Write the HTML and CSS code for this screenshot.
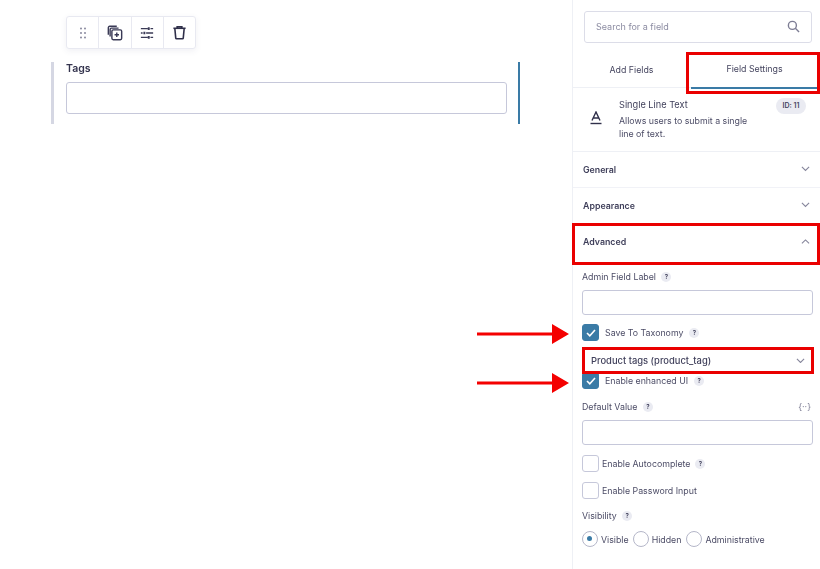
FILE: index.html
```html
<!DOCTYPE html>
<html lang="en">
<head>
<meta charset="utf-8">
<title>Field Settings</title>
<link rel="stylesheet" href="styles.css">
</head>
<body>
<div class="page">
  <main class="canvas">
    <div class="toolbar">
      <div class="tool"><svg width="16" height="16" viewBox="0 0 16 16" fill="#7c7c94"><circle cx="6" cy="3.500" r=".9"/><circle cx="10" cy="3.500" r=".9"/><circle cx="6" cy="8" r=".9"/><circle cx="10" cy="8" r=".9"/><circle cx="6" cy="12.500" r=".9"/><circle cx="10" cy="12.500" r=".9"/></svg></div>
      <div class="tool"><svg width="16" height="16" viewBox="0 0 18 18" fill="none" stroke="#3a3a56" stroke-width="1.600"><path d="M1.500 11V3a1.500 1.500 0 0 1 1.500-1.500h8"/><path d="M3.500 13V5A1.500 1.500 0 0 1 5 3.500h8"/><rect x="5.500" y="5.500" width="11" height="11" rx="1.500"/><path d="M11 8.500v5M8.500 11h5"/></svg></div>
      <div class="tool"><svg width="14" height="14" viewBox="0 0 16 16" fill="none" stroke="#3a3a56" stroke-width="1.500"><path d="M1 3h8M12 3h3M1 8h2M7 8h8M1 13h8M12 13h3"/><path d="M10 1.500v3M5 6.500v3M10 11.500v3" stroke-width="2.200"/></svg></div>
      <div class="tool"><svg width="15" height="15" viewBox="0 0 16 16" fill="none" stroke="#2f2f4a" stroke-width="1.700"><path d="M1.500 3.500h13"/><path d="M5.500 3.500V2h5v1.500"/><path d="M3 3.500l1 10.500a.8.8 0 0 0 .8.700h6.400a.8.8 0 0 0 .8-.700l1-10.500"/></svg></div>
    </div>
    <section class="field">
      <label class="field-label">Tags</label>
      <div class="text-input tags-input"></div>
    </section>
  </main>

  <aside class="sidebar">
    <div class="search">
      <span>Search for a field</span>
      <svg width="13" height="13" viewBox="0 0 14 14" fill="none" stroke="#7d7d94" stroke-width="1.500"><circle cx="5.800" cy="5.800" r="4.300"/><path d="M9 9l4 4"/></svg>
    </div>
    <div class="tabs">
      <div class="tab">Add Fields</div>
      <div class="tab tab-active">Field Settings</div>
    </div>
    <div class="info">
      <svg class="info-icon" width="14" height="14" viewBox="0 0 14 14" fill="none" stroke="#2f2f4a" stroke-width="1.400"><path d="M3 9.500L7 1l4 8.500M4.500 7h5"/><path d="M1.500 12.500h11"/></svg>
      <div class="info-text">
        <div class="info-title">Single Line Text</div>
        <div class="info-desc">Allows users to submit a single line of text.</div>
      </div>
      <div class="badge">ID: 11</div>
    </div>
    <div class="section-row"><span>General</span><svg class="chev" viewBox="0 0 10 6"><path d="M1 1l4 4 4-4"/></svg></div>
    <div class="section-row"><span>Appearance</span><svg class="chev" viewBox="0 0 10 6"><path d="M1 1l4 4 4-4"/></svg></div>
    <div class="section-row section-open"><span>Advanced</span><svg class="chev" viewBox="0 0 10 6"><path d="M1 5l4-4 4 4"/></svg></div>

    <div class="settings">
      <div class="label label-admin">Admin Field Label <i class="help">?</i></div>
      <div class="text-input side-input"></div>

      <div class="check check-taxonomy">
        <span class="box box-on"><svg width="10" height="8" viewBox="0 0 10 8" fill="none" stroke="#fff" stroke-width="1.600"><path d="M1 4l2.800 2.800L9 1"/></svg></span>
        <span>Save To Taxonomy</span> <i class="help">?</i>
      </div>
      <div class="select">
        <span>Product tags (product_tag)</span>
        <svg class="chev" viewBox="0 0 10 6"><path d="M1 1l4 4 4-4"/></svg>
      </div>
      <div class="check">
        <span class="box box-on"><svg width="10" height="8" viewBox="0 0 10 8" fill="none" stroke="#fff" stroke-width="1.600"><path d="M1 4l2.800 2.800L9 1"/></svg></span>
        <span>Enable enhanced UI</span> <i class="help">?</i>
      </div>

      <div class="label label-default"><span>Default Value <i class="help">?</i></span><span class="merge">{··}</span></div>
      <div class="text-input side-input"></div>

      <div class="check check-plain check-auto">
        <span class="box"></span><span>Enable Autocomplete</span> <i class="help">?</i>
      </div>
      <div class="check check-plain check-pass">
        <span class="box"></span><span>Enable Password Input</span>
      </div>

      <div class="label label-vis">Visibility <i class="help">?</i></div>
      <div class="radios">
        <span class="radio radio-on"></span><span class="radio-text">Visible</span>
        <span class="radio"></span><span class="radio-text">Hidden</span>
        <span class="radio"></span><span class="radio-text">Administrative</span>
      </div>
    </div>
  </aside>

  <div class="mark mark-tab"></div>
  <div class="mark mark-adv"></div>
  <div class="mark mark-select"></div>
  <svg class="arrow arrow-1" width="92" height="20" viewBox="0 0 92 20"><path d="M0 8.500h75V0l17 10-17 10v-8.500H0z" fill="#f40000"/></svg>
  <svg class="arrow arrow-2" width="92" height="20" viewBox="0 0 92 20"><path d="M0 8.500h75V0l17 10-17 10v-8.500H0z" fill="#f40000"/></svg>
</div>
</body>
</html>
```
FILE: styles.css
```css
* { box-sizing: border-box; }
html, body { margin: 0; padding: 0; background: #fff; }
body { font-family: Inter, "Liberation Sans", sans-serif; color: #3f3f5a; overflow: hidden; }

.page { position: relative; width: 820px; height: 569px; display: flex; filter: blur(0.5px); }

.canvas { width: 572px; flex: none; padding: 16px 0 0 51px; }
.toolbar { display: flex; width: 130px; height: 33px; margin-left: 15px; background: #fff; border: 1px solid #e8e9f1; border-radius: 3px; box-shadow: 0 2px 6px rgba(60, 60, 110, .08); }
.tool { flex: 1; display: flex; align-items: center; justify-content: center; border-right: 1px solid #e8e9f1; }
.tool:last-child { border-right: 0; }

.field { width: 469px; height: 62px; margin-top: 13px; padding: 0 11px 0 12px; border-left: 3px solid #d5d7e3; border-right: 2px solid #3a7ba6; }
.field-label { display: block; font-size: 10.500px; font-weight: 600; line-height: 13px; color: #34344e; }
.text-input { background: #fff; border: 1.500px solid #c6c8da; border-radius: 3px; }
.tags-input { height: 32px; margin-top: 7px; }

.sidebar { width: 248px; flex: none; border-left: 1px solid #eef0f5; }
.search { display: flex; align-items: center; justify-content: space-between; width: 228px; height: 32px; margin: 11px 0 0 11px; padding: 0 11px 2px; border: 1.500px solid #dcdde8; border-radius: 3px; font-size: 9px; line-height: 1; color: #8c8ca2; }

.tabs { display: flex; height: 36px; margin-top: 9px; border-bottom: 1px solid #eef0f5; font-size: 8.800px; color: #45455f; }
.tab { display: flex; align-items: center; justify-content: center; height: 37px; padding-bottom: 3px; }
.tab:first-child { width: 117px; }
.tab-active { width: 127px; margin-left: 1px; border-bottom: 2px solid #3a7ba6; }

.info { position: relative; display: flex; height: 64px; padding: 10px 0 0 46px; border-bottom: 1px solid #eef0f5; }
.info-icon { position: absolute; left: 16px; top: 23px; }
.info-text { width: 136px; }
.info-title { font-size: 9.200px; line-height: 13px; color: #3f3f5a; }
.info-desc { margin-top: 3px; font-size: 8.800px; line-height: 13px; color: #4c4c66; }
.badge { position: absolute; right: 14px; top: 10px; width: 30px; height: 16px; border-radius: 8px; background: #eaebf2; font-size: 7px; font-weight: 600; line-height: 16px; text-align: center; color: #45455f; }

.section-row { display: flex; align-items: center; justify-content: space-between; height: 36px; padding: 0 10px 1px; border-bottom: 1px solid #f1f2f7; font-size: 8.800px; font-weight: 600; color: #3f3f5a; }
.section-open { border-bottom: 0; }
.chev { width: 9px; height: 5.400px; fill: none; stroke: #85859b; stroke-width: 1.200; }

.settings { padding: 0 7px 0 9px; font-size: 8.800px; color: #4c4c66; }
.label { font-size: 8.800px; line-height: 12px; }
.label-admin { margin-top: 11px; }
.side-input { height: 25px; margin-top: 7px; }
.help { display: inline-block; width: 10px; height: 10px; margin-left: 3px; border-radius: 50%; background: #eaebf2; font-style: normal; font-size: 6px; font-weight: 700; line-height: 10px; text-align: center; vertical-align: 1px; color: #45455f; }

.check { display: flex; align-items: center; gap: 5px; height: 17px; }
.check .help { margin-left: 1px; }
.check-taxonomy { margin-top: 9px; }
.box { display: flex; align-items: center; justify-content: center; width: 17px; height: 17px; margin-right: 1px; border: 1.500px solid #c6c8da; border-radius: 3px; background: #fff; }
.box-on { background: #3a7ba6; border-color: #3a7ba6; }
.select { display: flex; align-items: center; justify-content: space-between; height: 23px; margin: 8px 0 0; padding: 0 8px 0 9px; font-size: 9.400px; font-weight: 500; color: #3f3f5a; }

.label-default { display: flex; justify-content: space-between; margin-top: 12px; padding-right: 2px; }
.merge { color: #7d7d94; font-size: 9px; }

.check-plain { gap: 2px; }
.check-plain .help { margin-left: 3px; }
.check-auto { margin-top: 10px; }
.check-pass { margin-top: 10px; }
.label-vis { margin-top: 11px; }

.radios { display: flex; align-items: center; margin-top: 9px; }
.radio { position: relative; width: 16px; height: 16px; border: 1.500px solid #b4b6c8; border-radius: 50%; background: #fff; }
.radio-on::after { content: ""; position: absolute; left: 4px; top: 4px; width: 5px; height: 5px; border-radius: 50%; background: #3a7ba6; }
.radio-text { margin: 0 4px 0 3px; font-size: 8.800px; }
.radio-text:nth-child(4) { margin-right: 5px; }

.mark { position: absolute; border: 3px solid #ea0000; }
.mark-tab { left: 686px; top: 52px; width: 134px; height: 42px; }
.mark-adv { left: 572px; top: 223px; width: 248px; height: 42px; }
.mark-select { left: 582px; top: 347px; width: 232px; height: 27px; }
.arrow { position: absolute; left: 477px; }
.arrow-1 { top: 324px; }
.arrow-2 { top: 373px; }
```
